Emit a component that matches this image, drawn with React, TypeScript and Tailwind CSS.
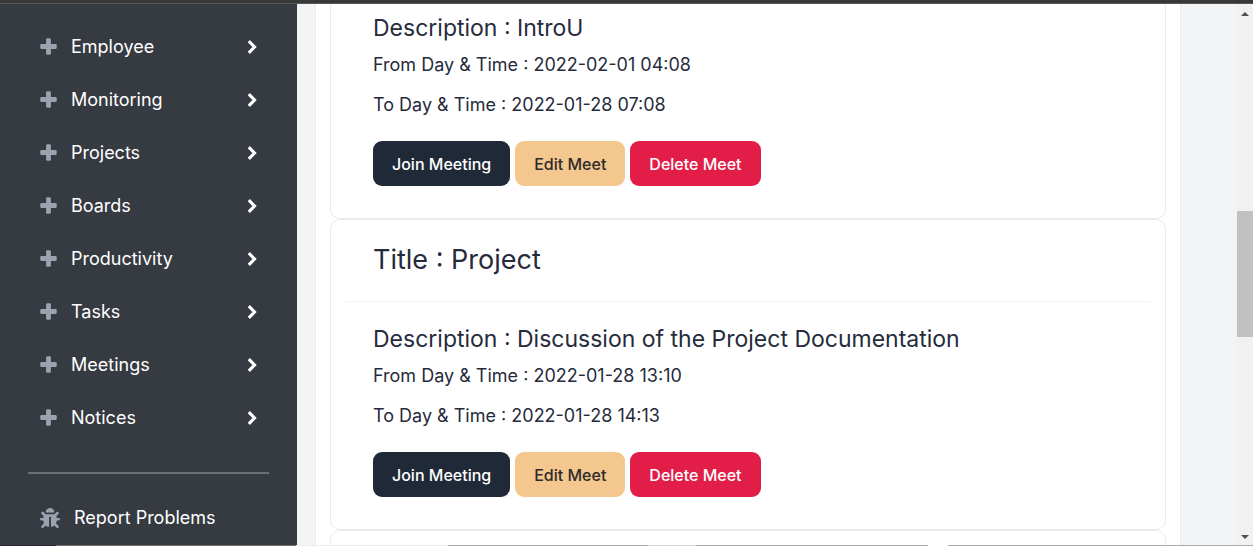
import { FaBug } from "react-icons/fa";

const menu = [
  "Employee",
  "Monitoring",
  "Projects",
  "Boards",
  "Productivity",
  "Tasks",
  "Meetings",
  "Notices",
];

type Meeting = {
  title?: string;
  description: string;
  from: string;
  to: string;
};

const meetings: Meeting[] = [
  { description: "IntroU", from: "2022-02-01 04:08", to: "2022-01-28 07:08" },
  {
    title: "Project",
    description: "Discussion of the Project Documentation",
    from: "2022-01-28 13:10",
    to: "2022-01-28 14:13",
  },
];

function PlusIcon() {
  return (
    <svg viewBox="0 0 17 17" aria-hidden="true" className="mr-3.5 size-[17px] shrink-0 fill-[#9ca3af]">
      <rect x="6.1" y="0.3" width="4.8" height="16.4" rx="1.2" />
      <rect x="0.3" y="6.1" width="16.4" height="4.8" rx="1.2" />
    </svg>
  );
}

function ChevronIcon() {
  return (
    <svg
      viewBox="0 0 10 16"
      aria-hidden="true"
      className="h-4 w-2.5 shrink-0 fill-none stroke-white"
      strokeWidth="3.1"
    >
      <path d="M1.8 2.2 7.5 8l-5.7 5.8" />
    </svg>
  );
}

function Sidebar() {
  return (
    <nav className="flex w-[297px] shrink-0 flex-col bg-[#363a41] pt-4 text-[18px] text-white">
      <ul>
        {menu.map((label) => (
          <li key={label}>
            <button type="button" className="flex h-[53px] w-full items-center px-10 text-left">
              <PlusIcon />
              <span className="flex-1">{label}</span>
              <ChevronIcon />
            </button>
          </li>
        ))}
      </ul>
      <hr className="mx-7 mt-7 border-t-2 border-[#6b7078]" />
      <a href="#report" className="mt-4 flex h-[55px] items-center pl-10">
        <FaBug className="mr-3.5 size-5 shrink-0 text-[#9ca3af]" />
        Report Problems
      </a>
    </nav>
  );
}

function MeetingCard({ meeting }: { meeting: Meeting }) {
  const { title, description, from, to } = meeting;
  return (
    <article
      className={
        title
          ? "rounded-[10px] border border-[#ebebed] bg-white"
          : "rounded-b-[10px] border border-t-0 border-[#ebebed] bg-white"
      }
    >
      {title && (
        <header className="mx-3.5 flex h-[82px] items-center border-b border-[#f2f3f5] px-7">
          <h2 className="text-[27px]">Title : {title}</h2>
        </header>
      )}
      <div className={title ? "px-[42px] pt-[23px] pb-8" : "px-[42px] pt-[10px] pb-8"}>
        <h3 className="text-[23px] leading-[29px]">Description : {description}</h3>
        <p className="mt-2 text-[18px] leading-[28px]">From Day &amp; Time : {from}</p>
        <p className="mt-3 text-[18px] leading-[28px]">To Day &amp; Time : {to}</p>
        <div className="mt-[22px] flex gap-[5px] text-[16px] font-medium">
          <button type="button" className="h-[45px] rounded-[9px] bg-[#1f2937] px-[19px] text-white">
            Join Meeting
          </button>
          <button type="button" className="h-[45px] rounded-[9px] bg-[#f3c78e] px-[19px] text-[#2f2b2a]">
            Edit Meet
          </button>
          <button type="button" className="h-[45px] rounded-[9px] bg-[#e11d48] px-[19px] text-white">
            Delete Meet
          </button>
        </div>
      </div>
    </article>
  );
}

function Scrollbar() {
  return (
    <div aria-hidden="true" className="flex w-4 shrink-0 flex-col items-center bg-[#f1f1f1]">
      <svg viewBox="0 0 8 4" className="mt-2 h-1 w-2 shrink-0 fill-[#505050]">
        <path d="M0 4 4 0l4 4z" />
      </svg>
      <div className="flex w-full flex-1 flex-col pt-[195px]">
        <div className="h-[126px] bg-[#c1c1c1]" />
      </div>
      <svg viewBox="0 0 8 4" className="mb-1.5 h-1 w-2 shrink-0 fill-[#505050]">
        <path d="M0 0l4 4 4-4z" />
      </svg>
    </div>
  );
}

export default function App() {
  return (
    <div className="flex h-screen flex-col overflow-hidden bg-[#363a41] font-['Inter',sans-serif] text-[#262b3c]">
      <div className="h-1 shrink-0 border-b border-[#55585a] bg-[#383838]" />
      <div className="flex min-h-0 flex-1">
        <Sidebar />
        <main className="flex min-w-0 flex-1 overflow-hidden bg-[#f2f4f6] pr-14 pl-[18px]">
          <section className="min-w-0 flex-1 border-x border-[#ebecf1] bg-white px-3.5">
            {meetings.map((meeting) => (
              <MeetingCard key={meeting.from} meeting={meeting} />
            ))}
            <div className="h-20 rounded-t-[10px] border border-[#ebebed]" />
          </section>
        </main>
        <Scrollbar />
      </div>
      <div className="flex h-px shrink-0">
        <div className="w-14 bg-[#25282f]" />
        <div className="w-60 bg-[#6e7073]" />
        <div className="w-38 bg-[#ececec]" />
        <div className="w-50 bg-[#a9abad]" />
        <div className="w-12 bg-[#d4d5d6]" />
        <div className="w-58 bg-[#a9abad]" />
        <div className="w-5 bg-white" />
        <div className="flex-1 bg-[#a9abad]" />
      </div>
    </div>
  );
}
